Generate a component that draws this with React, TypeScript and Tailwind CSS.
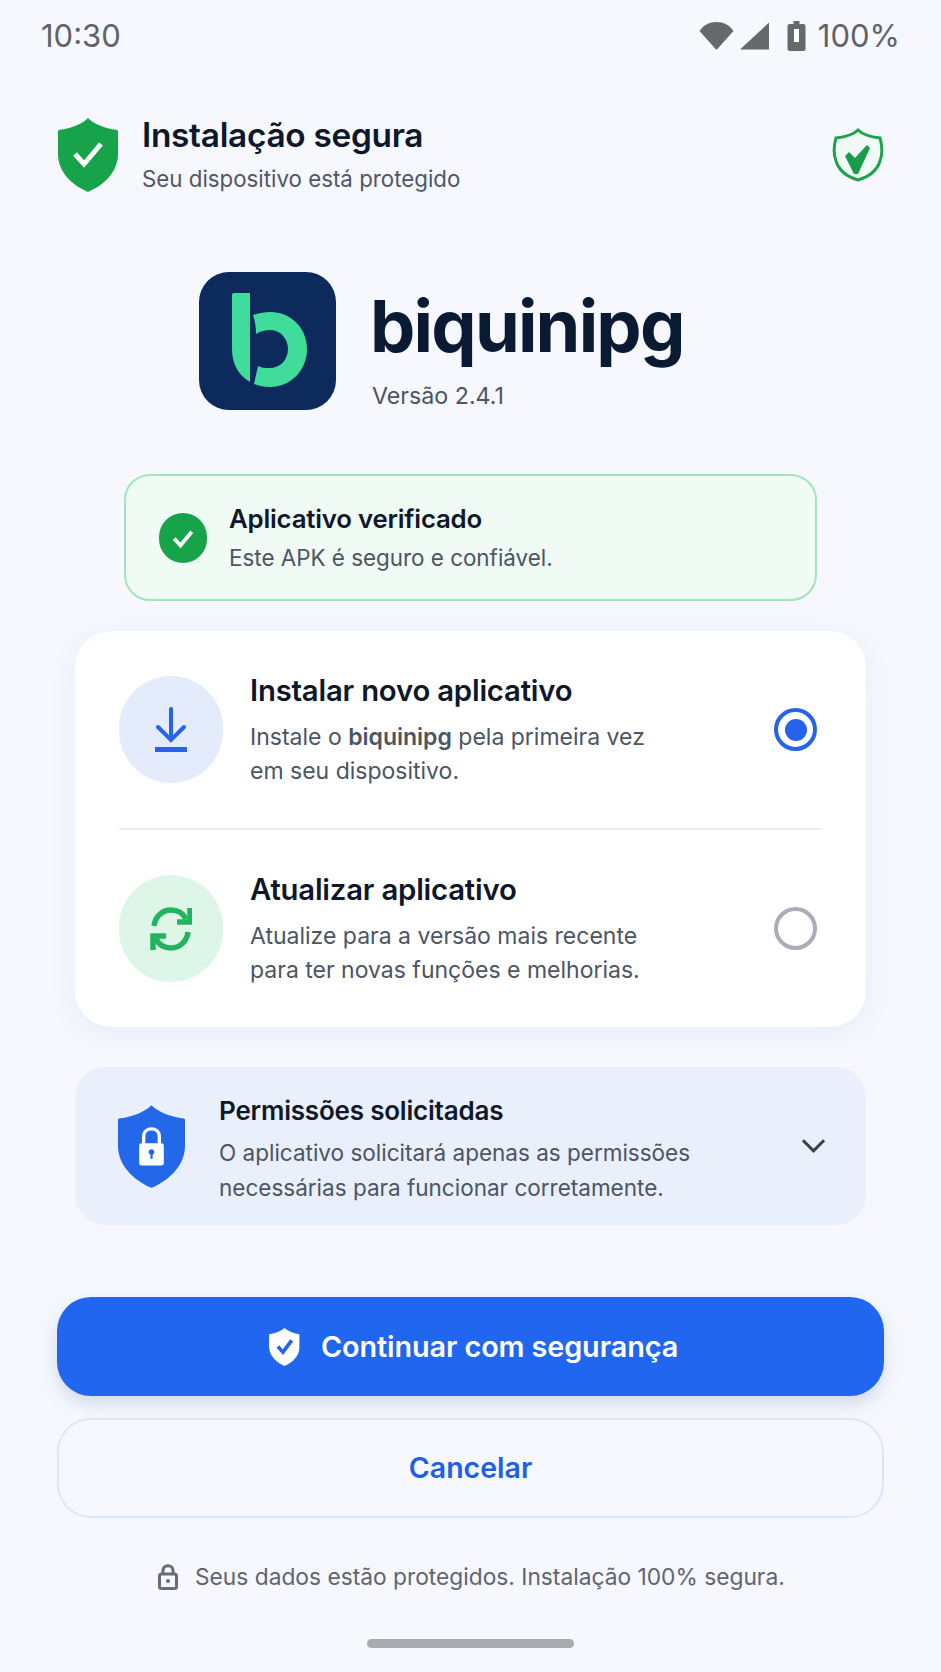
import React from "react";

const font = { fontFamily: "Inter, 'Noto Sans', sans-serif" };

function Shield({ className, fill, children }: { className?: string; fill: string; children?: React.ReactNode }) {
  return (
    <svg viewBox="0 0 60 74" className={className}>
      <path d="M30 0C36 6 46 10 59 12C60 12 60 13 60 14V36C60 54 46 67 30 74C14 67 0 54 0 36V14C0 13 0 12 1 12C14 10 24 6 30 0Z" fill={fill} />
      {children}
    </svg>
  );
}

function Option({ icon, circle, title, lines, radio }: { icon: React.ReactNode; circle: string; title: string; lines: React.ReactNode; radio: React.ReactNode }) {
  return (
    <div className="flex items-center h-[197px] pl-[44px] pr-[49px]">
      <div className={`w-[104px] h-[107px] rounded-full flex items-center justify-center shrink-0 ${circle}`}>{icon}</div>
      <div className="ml-[27px] flex-1 pt-[2px]">
        <div className="text-[29.3px] leading-[36px] font-semibold text-[#0f172a] tracking-[-0.2px]">{title}</div>
        <div className="mt-[11px] text-[23px] leading-[34px] text-[#4b5563]">{lines}</div>
      </div>
      {radio}
    </div>
  );
}

export default function App() {
  return (
    <div style={font} className="w-[941px] h-[1672px] overflow-hidden bg-[#f6f8fe] flex flex-col">
      {/* status bar */}
      <div className="h-[72px] pl-[41px] pr-[41px] flex items-center justify-between text-[#5f6368] text-[31px]">
        <span>10:30</span>
        <div className="flex items-center">
          <svg viewBox="0 0 34 28" className="w-[35px] h-[28px]">
            <path d="M0 9C4 3 10 0 17 0C24 0 30 3 34 9L17 28Z" fill="#66686c" />
          </svg>
          <svg viewBox="0 0 30 28" className="w-[29px] h-[28px] ml-[6px]">
            <path d="M30 0V28H0Z" fill="#66686c" />
          </svg>
          <svg viewBox="0 0 18 30" className="w-[19px] h-[30px] ml-[18px]">
            <path d="M6 0H12V3H16C17 3 18 4 18 5V28C18 29 17 30 16 30H2C1 30 0 29 0 28V5C0 4 1 3 2 3H6Z" fill="#66686c" />
            <rect x="6.5" y="8" width="5" height="13" fill="#fff" />
          </svg>
          <span className="ml-[12px]">100%</span>
        </div>
      </div>

      {/* header */}
      <div className="h-[74px] mt-[46px] pl-[58px] pr-[56px] flex items-center">
        <Shield className="w-[60px] h-[74px]" fill="#16a34a">
          <path d="M17 36L26 46L43 26" fill="none" stroke="#fff" strokeWidth="5" />
        </Shield>
        <div className="ml-[24px] flex-1">
          <div className="text-[33.4px] leading-[38px] font-semibold text-[#0f172a] tracking-[-0.3px]">Instalação segura</div>
          <div className="mt-[10px] text-[22.3px] leading-[30px] text-[#4f5766]">Seu dispositivo está protegido</div>
        </div>
        <svg viewBox="0 0 54 56" className="w-[54px] h-[56px]">
          <path d="M27 3C31 7 40 10 49 11C51 18 52 26 49 34C46 44 37 50 27 53C17 50 8 44 5 34C2 26 3 18 5 11C14 10 23 7 27 3Z" fill="#f1faf5" stroke="#1ba34f" strokeWidth="3" />
          <path d="M14 29L18 25L24 31L36 18L39 21L27 47L23 47Z" fill="#1a9a4b" />
        </svg>
      </div>

      {/* brand */}
      <div className="mt-[80px] pl-[199px] flex items-start">
        <div className="w-[137px] h-[138px] rounded-[30px] bg-[#0c2a5c] flex items-center justify-center">
          <svg viewBox="0 0 137 138" className="w-[137px] h-[138px]">
            <path d="M33 23Q33 21 35 21H51V110C41 104 33 94 33 77Z" fill="#3fdc9c" />
            <path d="M54 43C60 41 66 40 71 40C92 40 108 56 108 77C108 98 92 115 71 115C65 115 60 114 55 112L59 94C63 96 67 96 71 96C81 96 89 88 89 77C89 66 81 58 71 58C66 58 62 59 57 62C57 55 56 49 54 43Z" fill="#3fdc9c" />
          </svg>
        </div>
        <div className="ml-[36px] mt-[14px]">
          <div className="ml-[-2px] text-[72px] leading-[80px] font-bold text-[#0b1a33] tracking-[-1.8px]">biquinipg</div>
          <div className="mt-[15px] text-[23.2px] leading-[30px] text-[#4b5563]">Versão 2.4.1</div>
        </div>
      </div>

      {/* verified */}
      <div className="mt-[63px] mx-[124px] h-[127px] rounded-[26px] border-2 border-[#a3e3bd] bg-[#effbf4] flex items-center pl-[33px]">
        <div className="w-[48px] h-[50px] rounded-full bg-[#16a34a] flex items-center justify-center">
          <svg viewBox="0 0 24 24" className="w-[30px] h-[30px]">
            <path d="M5 12.5L10 18L19 7" fill="none" stroke="#fff" strokeWidth="3" />
          </svg>
        </div>
        <div className="ml-[22px]">
          <div className="text-[25.8px] leading-[32px] font-semibold text-[#0f172a] tracking-[-0.2px]">Aplicativo verificado</div>
          <div className="mt-[8px] text-[22.4px] leading-[30px] text-[#4b5563]">Este APK é seguro e confiável.</div>
        </div>
      </div>

      {/* options */}
      <div className="mt-[30px] mx-[75px] h-[396px] rounded-[36px] bg-white shadow-[0_6px_28px_rgba(30,64,175,0.07)] flex flex-col">
        <Option
          circle="bg-[#e4ecfb]"
          title="Instalar novo aplicativo"
          lines={<>Instale o <b className="font-semibold">biquinipg</b> pela primeira vez<br />em seu dispositivo.</>}
          icon={
            <svg viewBox="0 0 34 45" className="w-[34px] h-[45px]">
              <path d="M17 2V33M4 20L17 33L30 20" fill="none" stroke="#2563eb" strokeWidth="4" strokeLinecap="round" />
              <rect x="1" y="40" width="32" height="5" fill="#2563eb" />
            </svg>
          }
          radio={
            <div className="w-[43px] h-[43px] rounded-full border-[4px] border-[#2563eb] flex items-center justify-center">
              <div className="w-[22px] h-[22px] rounded-full bg-[#2563eb]" />
            </div>
          }
        />
        <div className="h-[2px] mx-[44px] bg-[#ecedf3] shrink-0" />
        <Option
          circle="bg-[#def6e7]"
          title="Atualizar aplicativo"
          lines={<>Atualize para a versão mais recente<br />para ter novas funções e melhorias.</>}
          icon={
            <svg viewBox="0 0 42 46" className="w-[42px] h-[46px]">
              <path d="M4 20C5 11 12 4 21 4C27 4 33 7 36 13" fill="none" stroke="#22b35e" strokeWidth="5.5" />
              <path d="M40 2V16H27" fill="none" stroke="#22b35e" strokeWidth="5.5" />
              <path d="M38 26C37 35 30 42 21 42C15 42 9 39 6 33" fill="none" stroke="#22b35e" strokeWidth="5.5" />
              <path d="M3 44V30H16" fill="none" stroke="#22b35e" strokeWidth="5.5" />
            </svg>
          }
          radio={<div className="w-[43px] h-[43px] rounded-full border-[4px] border-[#a9adb8]" />}
        />
      </div>

      {/* permissions */}
      <div className="mt-[40px] mx-[75px] h-[158px] rounded-[30px] bg-[#e9effb] flex items-center pl-[43px] pr-[40px]">
        <Shield className="w-[67px] h-[83px] shrink-0" fill="#2468ea">
          <rect x="19" y="34" width="22" height="20" rx="2" fill="#fff" />
          <path d="M23 35V28C23 19 37 19 37 28V35" fill="none" stroke="#fff" strokeWidth="3" />
          <circle cx="30" cy="42" r="2.5" fill="#2468ea" />
          <rect x="29" y="43" width="2" height="5" fill="#2468ea" />
        </Shield>
        <div className="ml-[34px] flex-1 pt-[8px]">
          <div className="text-[26px] leading-[32px] font-semibold text-[#0f172a] tracking-[-0.2px]">Permissões solicitadas</div>
          <div className="mt-[8px] text-[22.5px] leading-[35px] text-[#4b5563]">O aplicativo solicitará apenas as permissões<br />necessárias para funcionar corretamente.</div>
        </div>
        <svg viewBox="0 0 26 16" className="w-[25px] h-[16px]">
          <path d="M2 2L13 13L24 2" fill="none" stroke="#374151" strokeWidth="3.2" />
        </svg>
      </div>

      {/* buttons */}
      <div className="mt-[72px] mx-[57px] h-[99px] rounded-[34px] bg-[#2166ee] shadow-[0_8px_18px_rgba(30,64,120,0.16)] flex items-center justify-center pl-[6px]">
        <svg viewBox="0 0 60 74" className="w-[31px] h-[38px]">
          <path d="M30 0C36 6 46 10 59 12V36C60 54 46 67 30 74C14 67 0 54 0 36V12C14 10 24 6 30 0Z" fill="#fff" />
          <path d="M17 36L27 47L44 24" fill="none" stroke="#2166ee" strokeWidth="7" />
        </svg>
        <span className="ml-[21px] text-[28.8px] font-semibold text-white tracking-[-0.1px]">Continuar com segurança</span>
      </div>
      <div className="mt-[22px] mx-[57px] h-[100px] rounded-[34px] border-2 border-[#dce6fb] flex items-center justify-center">
        <span className="text-[28.5px] font-semibold text-[#1d5fe8]">Cancelar</span>
      </div>

      {/* footer */}
      <div className="mt-[43px] h-[32px] pl-[158px] flex items-center text-[22.75px] text-[#5f6470]">
        <svg viewBox="0 0 20 26" className="w-[20px] h-[26px]">
          <rect x="1.5" y="10" width="17" height="14.5" rx="2" fill="none" stroke="#686c76" strokeWidth="3" />
          <path d="M5 10V6.5C5 0 15 0 15 6.5V10" fill="none" stroke="#686c76" strokeWidth="3" />
          <circle cx="10" cy="17" r="2" fill="#686c76" />
        </svg>
        <span className="ml-[17px]">Seus dados estão protegidos. Instalação 100% segura.</span>
      </div>

      <div className="mt-[46px] mx-auto w-[207px] h-[9px] rounded-full bg-[#aaabb0]" />
    </div>
  );
}
